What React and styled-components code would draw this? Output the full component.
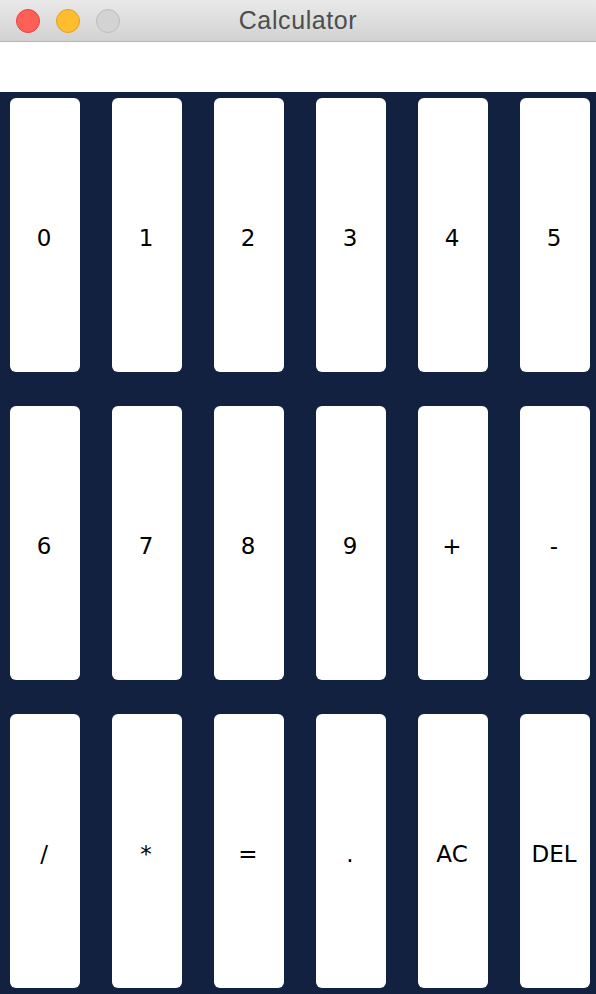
import React from "react";
import styled, { createGlobalStyle } from "styled-components";

const Global = createGlobalStyle`
  html, body { margin: 0; padding: 0; background: #ffffff; }
  * { box-sizing: border-box; }
`;

const Window = styled.div`
  width: 596px;
  height: 994px;
  display: flex;
  flex-direction: column;
  overflow: hidden;
`;

const TitleBar = styled.div`
  height: 42px;
  flex: none;
  display: grid;
  grid-template-columns: 1fr auto 1fr;
  align-items: center;
  padding: 0 16px;
  background: linear-gradient(#e9e9e9, #d2d2d2);
  border-bottom: 1px solid #b3b3b3;
`;

const Lights = styled.div`
  display: flex;
  gap: 16px;
  align-items: center;
`;

const Light = styled.span`
  width: 24px;
  height: 24px;
  border-radius: 50%;
  background: ${(p) => p.$bg};
  border: 1px solid ${(p) => p.$border};
`;

const Title = styled.div`
  font-family: "Liberation Sans", Arial, sans-serif;
  font-size: 25px;
  letter-spacing: 0.6px;
  color: #4d4d4d;
  margin-left: 0px;
`;

const Display = styled.div`
  height: 50px;
  flex: none;
  background: #ffffff;
`;

const Keypad = styled.div`
  flex: 1;
  background: #11213f;
  display: grid;
  grid-template-columns: repeat(6, 70px);
  grid-template-rows: repeat(3, 274px);
  column-gap: 32px;
  row-gap: 34px;
  padding: 6px 6px 6px 10px;
`;

const Key = styled.button`
  border: none;
  margin: 0;
  padding: 6px 2px 0 0;
  background: #ffffff;
  border-radius: 6px;
  display: flex;
  align-items: center;
  justify-content: center;
  font-family: "DejaVu Sans", Verdana, sans-serif;
  font-size: 23px;
  color: #000000;
  cursor: pointer;
`;

const keys = ["0","1","2","3","4","5","6","7","8","9","+","-","/","*","=",".","AC","DEL"];

export default function App() {
  return (
    <>
      <Global />
      <Window>
        <TitleBar>
          <Lights>
            <Light $bg="#fe5f57" $border="#e2463f" />
            <Light $bg="#febc2e" $border="#dfa123" />
            <Light $bg="#d3d3d3" $border="#bdbdbd" />
          </Lights>
          <Title>Calculator</Title>
          <div />
        </TitleBar>
        <Display />
        <Keypad>
          {keys.map((k) => (
            <Key key={k}>{k}</Key>
          ))}
        </Keypad>
      </Window>
    </>
  );
}
